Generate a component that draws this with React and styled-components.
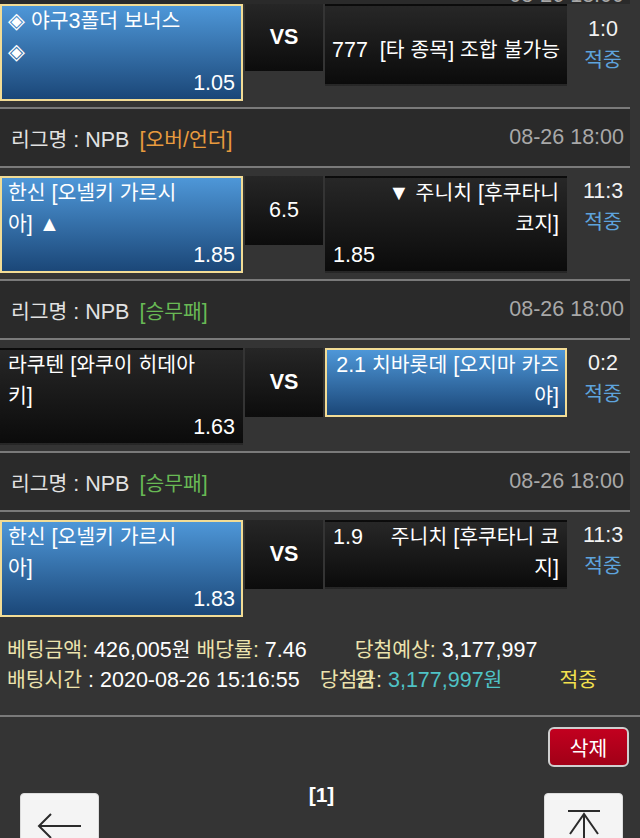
import React from 'react'
import styled, { createGlobalStyle } from 'styled-components'

const GlobalStyle = createGlobalStyle`
  html, body {
    margin: 0;
    padding: 0;
    background: #343434;
    overflow: hidden;
  }
  body {
    font-family: "Liberation Sans", "Noto Sans CJK KR", sans-serif;
    font-size: 21.5px;
    color: #fff;
  }
`

const Page = styled.div`
  width: 640px;
  height: 838px;
  overflow: hidden;
  background: #343434;
`

const List = styled.div`
  width: 630px;
`

// hangul runs a touch smaller, like the phone font
const Ko = styled.span`
  font-size: 0.95em;
`

const ko = (text) =>
  text.split(/([\uAC00-\uD7A3]+)/).map((part, i) =>
    i % 2 ? <Ko key={i}>{part}</Ko> : part
  )

const TopStrip = styled.div`
  height: 4px;
  overflow: hidden;
  background: #2a2a2a;
  display: flex;
  justify-content: flex-end;
  padding-right: 6px;
`

const StripDate = styled.span`
  display: block;
  margin-top: -15px;
  line-height: 20px;
  color: #a8a8a8;
`

const LeagueHeader = styled.div`
  display: flex;
  justify-content: space-between;
  align-items: center;
  height: 57px;
  padding: 0 6px 0 11px;
  background: #2a2a2a;
  border-top: 2px solid #7a7a7a;
  border-bottom: 2px solid #7a7a7a;
  color: #e2e2e2;
`

const Tag = styled.span`
  margin-left: 10px;
  color: ${p => p.$color};
`

const KickOff = styled.span`
  color: #a8a8a8;
`

const Row = styled.div`
  display: flex;
  align-items: flex-start;
  gap: 2px;
  padding: ${p => (p.$first ? '0 0 6px' : '8px 0 6px')};
`

const Pick = styled.div`
  box-sizing: border-box;
  width: ${p => p.$w}px;
  min-height: 69px;
  border: 2px solid ${p => (p.$selected ? '#f2dc95' : 'transparent')};
  background: ${p =>
    p.$selected
      ? 'linear-gradient(#4e97d8, #1b4778)'
      : 'linear-gradient(#272727, #0b0b0b)'};
  padding: ${p => p.$pad || '0 6px'};
  line-height: 31px;
  color: #fff;
`

const Line = styled.div`
  text-align: ${p => p.$align || 'left'};
  white-space: pre;
`

const SplitLine = styled.div`
  display: flex;
  justify-content: space-between;
  white-space: pre;
`

const Versus = styled.div`
  width: 78px;
  height: ${p => p.$h || 69}px;
  display: flex;
  align-items: center;
  justify-content: center;
  background: linear-gradient(#262626, #0c0c0c);
  font-weight: ${p => (p.$bold ? 700 : 400)};
`

const Score = styled.div`
  flex: 1;
  padding: ${p => p.$top || 0}px 0 0 7px;
  text-align: center;
  line-height: 31px;
  color: #f2f2f2;
`

const Hit = styled.div`
  color: #5ea3dc;
`

const Info = styled.div`
  padding: 12px 7px 20px;
  border-bottom: 2px solid #7a7a7a;
  line-height: 30px;
`

const InfoLine = styled.div`
  position: relative;
  display: flex;
  white-space: pre;
`

const Cell = styled.span`
  margin-left: ${p => p.$gap || 0}px;
`

const Label = styled.span`
  color: #ece3ad;
`

const Value = styled.span`
  color: ${p => p.$color || '#fff'};
`

const Ghost = styled.span`
  position: absolute;
  left: 348px;
  top: 0;
  color: #ece3ad;
`

const Actions = styled.div`
  display: flex;
  justify-content: flex-end;
  padding: 10px 11px 0;
`

const DeleteButton = styled.button`
  width: 81px;
  height: 40px;
  padding: 0;
  border: 2px solid #cfcfcf;
  border-radius: 6px;
  background: linear-gradient(#c2001f, #a10017);
  color: #fff;
  font-family: inherit;
  font-size: 21.5px;
`

const Pager = styled.div`
  display: flex;
  justify-content: space-between;
  align-items: flex-start;
  padding: 26px 17px 0 20px;
`

const PageNum = styled.div`
  margin-top: -10px;
  line-height: 24px;
  font-size: 21px;
  font-weight: 700;
`

const NavButton = styled.button`
  width: 79px;
  height: 60px;
  padding: 0;
  background: #f4f4f4;
  border: 1px solid #dcdcdc;
  border-radius: 4px;
  display: block;
`

const Header = ({ tag, color }) => (
  <LeagueHeader>
    <span>
      {ko('리그명 : NPB')}
      <Tag $color={color}>{ko(tag)}</Tag>
    </span>
    <KickOff>08-26 18:00</KickOff>
  </LeagueHeader>
)

const App = () => (
  <Page>
    <GlobalStyle />
    <List>
      <TopStrip>
        <StripDate>08-26 18:00</StripDate>
      </TopStrip>

      <Row $first>
        <Pick $w={243} $selected>
          <Line>{ko('◈ 야구3폴더 보너스')}</Line>
          <Line>◈</Line>
          <Line $align="right">1.05</Line>
        </Pick>
        <Versus $h={67} $bold>VS</Versus>
        <Pick $w={242} $pad="29px 6px 18px 5px">
          <Line>{ko('777  [타 종목] 조합 불가능')}</Line>
        </Pick>
        <Score $top={10}>
          1:0
          <Hit>{ko('적중')}</Hit>
        </Score>
      </Row>

      <Header tag="[오버/언더]" color="#e89b3e" />
      <Row>
        <Pick $w={243} $selected>
          <Line>{ko('한신 [오넬키 가르시')}</Line>
          <Line>{ko('아] ▲')}</Line>
          <Line $align="right">1.85</Line>
        </Pick>
        <Versus>6.5</Versus>
        <Pick $w={242}>
          <Line $align="right">{ko('▼ 주니치 [후쿠타니')}</Line>
          <Line $align="right">{ko('코지]')}</Line>
          <Line>1.85</Line>
        </Pick>
        <Score>
          11:3
          <Hit>{ko('적중')}</Hit>
        </Score>
      </Row>

      <Header tag="[승무패]" color="#68b955" />
      <Row>
        <Pick $w={243}>
          <Line>{ko('라쿠텐 [와쿠이 히데아')}</Line>
          <Line>{ko('키]')}</Line>
          <Line $align="right">1.63</Line>
        </Pick>
        <Versus $bold>VS</Versus>
        <Pick $w={242} $selected>
          <Line $align="right">{ko('2.1 치바롯데 [오지마 카즈')}</Line>
          <Line $align="right">{ko('야]')}</Line>
        </Pick>
        <Score>
          0:2
          <Hit>{ko('적중')}</Hit>
        </Score>
      </Row>

      <Header tag="[승무패]" color="#68b955" />
      <Row>
        <Pick $w={243} $selected>
          <Line>{ko('한신 [오넬키 가르시')}</Line>
          <Line>{ko('아]')}</Line>
          <Line $align="right">1.83</Line>
        </Pick>
        <Versus $bold>VS</Versus>
        <Pick $w={242}>
          <SplitLine>
            <span>1.9</span>
            <span>{ko('주니치 [후쿠타니 코')}</span>
          </SplitLine>
          <Line $align="right">{ko('지]')}</Line>
        </Pick>
        <Score>
          11:3
          <Hit>{ko('적중')}</Hit>
        </Score>
      </Row>
    </List>

    <Info>
      <InfoLine>
        <Cell>
          <Label>{ko('베팅금액:')}</Label>
          <Value>{ko(' 426,005원 ')}</Value>
          <Label>{ko('배당률:')}</Label>
          <Value> 7.46</Value>
        </Cell>
        <Cell $gap={48}>
          <Label>{ko('당첨예상:')}</Label>
          <Value> 3,177,997</Value>
        </Cell>
      </InfoLine>
      <InfoLine>
        <Cell>
          <Label>{ko('배팅시간')}</Label>
          <Value> : 2020-08-26 15:16:55</Value>
        </Cell>
        <Cell $gap={20}>
          <Label>{ko('당첨금:')}</Label>
          <Value $color="#4fc3c6">{ko(' 3,177,997원')}</Value>
        </Cell>
        <Cell $gap={57}>
          <Value $color="#f3e14e">{ko('적중')}</Value>
        </Cell>
        <Ghost>{ko('원')}</Ghost>
      </InfoLine>
    </Info>

    <Actions>
      <DeleteButton>{ko('삭제')}</DeleteButton>
    </Actions>

    <Pager>
      <NavButton aria-label="prev">
        <svg width="77" height="58" viewBox="0 0 77 58" fill="none" stroke="#2b2b2b" strokeWidth="2">
          <path d="M18 32 H60" />
          <path d="M30 20 L18 32 L30 44" />
        </svg>
      </NavButton>
      <PageNum>[1]</PageNum>
      <NavButton aria-label="top">
        <svg width="77" height="58" viewBox="0 0 77 58" fill="none" stroke="#2b2b2b" strokeWidth="2">
          <path d="M23 17 H55" />
          <path d="M39 20 V60" />
          <path d="M25 40 L39 20 L53 40" />
        </svg>
      </NavButton>
    </Pager>
  </Page>
)

export default App
